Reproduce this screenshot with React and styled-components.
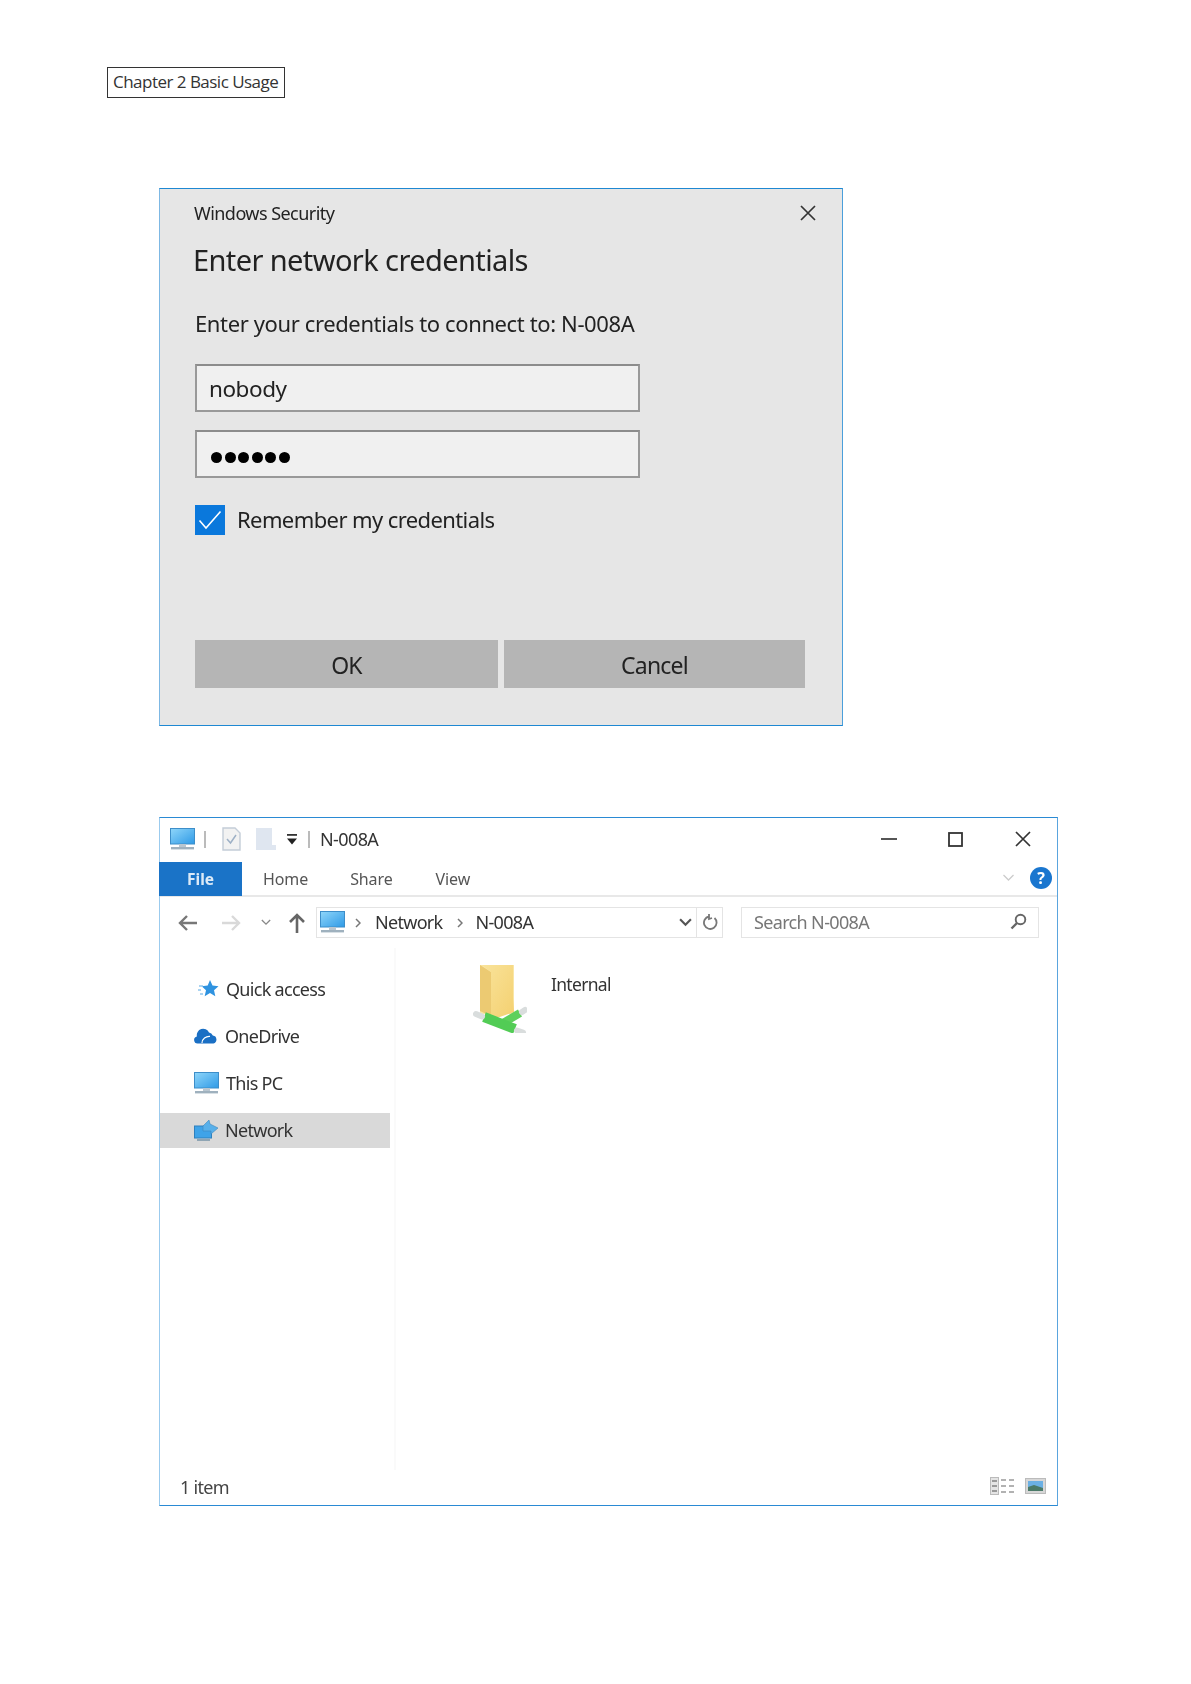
import React from 'react';
import styled, { createGlobalStyle } from 'styled-components';

const Global = createGlobalStyle`
  html, body { margin: 0; padding: 0; background: #fff; }
  * { box-sizing: border-box; }
`;
const Page = styled.div`
  width: 1191px; height: 1684px; padding: 67px 0 0 0; background: #fff; overflow: hidden;
  font-family: "Noto Sans", "Open Sans", sans-serif; color: #222;
`;
const ChapterTag = styled.div`
  margin-left: 107px; width: 178px; height: 31px; border: 1px solid #333;
  display: flex; align-items: center; padding: 0 0 2px 5px; white-space: nowrap;
  font: 17px/1 "Open Sans", sans-serif; letter-spacing: -0.52px; color: #333;
`;
const Dialog = styled.section`
  margin: 90px 0 0 159px; width: 684px; height: 538px;
  border: 1px solid #1e88d2; border-left-color: #7db8e4; border-right-color: #4b9fdb; background: #e6e6e6;
  padding: 10.5px 37px 37px 35px; display: flex; flex-direction: column; filter: blur(0.35px);
`;
const DialogTitleRow = styled.div`
  height: 26px; display: flex; align-items: center; justify-content: space-between;
`;
const DialogTitle = styled.div`
  font-size: 18px; letter-spacing: -0.55px; margin-left: -1px; color: #222; white-space: nowrap;
`;
const CloseSlot = styled.span`display: inline-flex; margin-right: -11px;`;
const DialogHeading = styled.h1`
  margin: 16px 0 0 -2px; font-size: 29px; line-height: 36px; font-weight: 400; letter-spacing: -0.6px; color: #222; white-space: nowrap;
`;
const Prompt = styled.p`
  margin: 30.5px 0 0; font-size: 22px; line-height: 30px; letter-spacing: -0.38px; color: #222; white-space: nowrap;
`;
const Field = styled.div`
  margin-top: ${p => p.$mt}px; width: 445px; height: 48px; flex: none; border: 2px solid #999; border-top-color: #8c8c8c;
  background: #f0f0f0; padding: 2px 0 0 12px; display: flex; align-items: center;
  font-size: 22.5px; letter-spacing: -0.45px; color: #222;
`;
const DotRow = styled.div`display: flex; gap: 2.6px; padding: 6px 0 0 2px;`;
const Dot = styled.span`width: 11px; height: 11px; border-radius: 50%; background: #000;`;
const CheckRow = styled.label`
  margin-top: 27px; display: flex; align-items: center; gap: 12px; height: 30px; flex: none;
  font-size: 22px; letter-spacing: -0.6px; color: #222; white-space: nowrap;
`;
const CheckLabel = styled.span`padding-bottom: 2px;`;
const CheckBoxMark = styled.span`
  width: 30px; height: 30px; background: #0a78dc; display: flex; align-items: center; justify-content: center;
`;
const ButtonRow = styled.div`margin-top: auto; display: flex; gap: 6px;`;
const DialogButton = styled.button`
  width: 303px; height: 48px; border: 0; padding: 2px 0 0; background: #b5b5b5;
  font: 400 23px "Noto Sans", sans-serif; letter-spacing: -0.8px; color: #222;
  &:last-child { width: 301px; }
`;
const Explorer = styled.section`
  margin: 91px 0 0 159px; width: 899px; height: 689px; display: flex; flex-direction: column;
  border: 1px solid #2a8ad4; border-left-color: #9bcbee; border-right-color: #5aa5de; background: #fff;
  font-size: 18px; letter-spacing: -0.35px; color: #333; filter: blur(0.4px);
`;
const TitleBar = styled.header`height: 44px; display: flex; align-items: center; padding: 0 0 2px 10px; flex: none;`;
const TitleSep = styled.span`width: 2px; height: 17px; background: #bbb; margin: 0 ${p => p.$mr}px 0 ${p => p.$ml}px;`;
const IconSlot = styled.span`display: inline-flex; flex: none; margin: 0 ${p => p.$mr || 0}px 0 ${p => p.$ml || 0}px;`;
const WindowTitle = styled.span`font-size: 18px; letter-spacing: -0.6px; color: #333;`;
const WindowControls = styled.div`margin-left: auto; display: flex; align-items: center; gap: 51px; padding-right: 26px;`;
const RibbonRow = styled.nav`
  height: 35px; flex: none; display: flex; align-items: stretch; border-bottom: 2px solid #e8e8e8; padding-right: 5px;
`;
const FileTab = styled.span`
  width: 83px; margin: 0 0 -1px -1px; background: #1a73c7; color: #dceaf7; font-weight: 700; display: flex; align-items: center; justify-content: center;
  font-size: 15.5px; letter-spacing: 0;
`;
const RibbonTab = styled.span`
  margin-left: ${p => p.$ml}px; display: flex; align-items: center; font-size: 16px; letter-spacing: -0.1px; color: #555;
`;
const RibbonEnd = styled.div`margin-left: auto; display: flex; align-items: center; gap: 15px; padding-bottom: 1px;`;
const HelpBadge = styled.span`
  width: 22px; height: 22px; border-radius: 50%; background: #1a76cf; color: #fff; font: 700 16px/22px "Noto Sans", sans-serif; letter-spacing: 0; text-align: center;
`;
const AddressRow = styled.div`height: 51px; flex: none; display: flex; align-items: center; padding-left: 18px;`;
const AddressBar = styled.div`
  width: 407px; height: 31px; margin-left: 10px; border: 1.5px solid #e4e4e4; display: flex; align-items: center; padding-left: 3px;
  font-size: 18px; letter-spacing: -0.7px; color: #333;
`;
const Crumbtext = styled.span`padding-bottom: 2px;`;
const RefreshCell = styled.span`
  width: 26px; height: 100%; border-left: 1.5px solid #e4e4e4; padding-left: 2px; display: flex; align-items: center; justify-content: center;
`;
const DropSlot = styled.span`display: inline-flex; margin: 0 4px 0 auto;`;
const SearchBox = styled.div`
  width: 298px; height: 31px; margin-left: 18px; border: 1.5px solid #e4e4e4; display: flex; align-items: center; justify-content: space-between;
  padding: 0 11px 2px 12px; font-size: 18px; letter-spacing: -0.65px; color: #777;
`;
const Body = styled.div`flex: 1; display: flex; min-height: 0;`;
const Sidebar = styled.aside`
  width: 236px; flex: none; border-right: 2px solid #fafafa; padding-top: 24px;
`;
const NavRow = styled.div`
  height: 35px; width: 230px; margin-bottom: 12px; display: flex; align-items: center; padding: 0 0 1px ${p => p.$pl}px; gap: ${p => p.$gap}px;
  background: ${p => p.$active ? '#d9d9d9' : 'transparent'}; font-size: 18px; letter-spacing: -0.7px; color: #333;
`;
const Content = styled.main`flex: 1; display: flex; align-items: flex-start; padding: 13px 0 0 77px;`;
const ShareItem = styled.div`display: flex; align-items: flex-start; gap: 24px;`;
const ShareName = styled.span`font-size: 17.5px; letter-spacing: -0.7px; margin-top: 11px; color: #333;`;
const StatusBar = styled.footer`
  height: 35px; flex: none; display: flex; align-items: center; justify-content: space-between; padding: 0 11px 1px 20px; font-size: 18px; letter-spacing: -0.7px; color: #444;
`;
const ViewIcons = styled.div`display: flex; align-items: center; gap: 10px; padding-bottom: 2px;`;

const Monitor = ({ w = 25 }) => (
  <svg width={w} height={w * 0.9} viewBox="0 0 25 22.5">
    <defs><linearGradient id="scr" x1="0" y1="0" x2="1" y2="1"><stop offset="0" stopColor="#8fd6fa" /><stop offset="1" stopColor="#2f9ae6" /></linearGradient></defs>
    <rect x="0.5" y="0.5" width="24" height="15.5" fill="url(#scr)" stroke="#3d8ec9" />
    <rect x="9" y="16" width="7" height="3" fill="#b9c6d0" />
    <rect x="1" y="19" width="23" height="2.4" fill="#9fb1be" />
  </svg>
);
const Close = ({ s = 16, c = '#333', sw = 1.7 }) => (
  <svg width={s} height={s} viewBox="0 0 16 16"><path d="M1 1L15 15M15 1L1 15" stroke={c} strokeWidth={sw} fill="none" /></svg>
);
const Chevron = ({ w = 12, h = 8, c = '#555', sw = 2 }) => (
  <svg width={w} height={h} viewBox="0 0 12 8"><path d="M1 1l5 5 5-5" stroke={c} strokeWidth={sw} fill="none" /></svg>
);
const Crumb = ({ ml, mr }) => (
  <IconSlot $ml={ml} $mr={mr}><svg width="6" height="10" viewBox="0 0 6 10"><path d="M1 1l4 4-4 4" stroke="#777" strokeWidth="1.5" fill="none" /></svg></IconSlot>
);
const Arrow = ({ c, flip }) => (
  <svg width="20" height="18" viewBox="0 0 20 18" style={flip ? { transform: 'scaleX(-1)' } : undefined}>
    <path d="M19 9H2M9 2L2 9l7 7" stroke={c} strokeWidth="2.4" fill="none" />
  </svg>
);

export default function App() {
  return (
    <Page>
      <Global />
      <ChapterTag>Chapter 2 Basic Usage</ChapterTag>

      <Dialog>
        <DialogTitleRow>
          <DialogTitle>Windows Security</DialogTitle>
          <CloseSlot><Close s={16} /></CloseSlot>
        </DialogTitleRow>
        <DialogHeading>Enter network credentials</DialogHeading>
        <Prompt>Enter your credentials to connect to: N-008A</Prompt>
        <Field $mt={25.5}>nobody</Field>
        <Field $mt={18}><DotRow>{[0, 1, 2, 3, 4, 5].map(i => <Dot key={i} />)}</DotRow></Field>
        <CheckRow>
          <CheckBoxMark>
            <svg width="24" height="20" viewBox="0 0 24 20"><path d="M1.5 10.5l6.5 7.5L22.5 1.5" stroke="#fff" strokeWidth="1.6" fill="none" /></svg>
          </CheckBoxMark>
          <CheckLabel>Remember my credentials</CheckLabel>
        </CheckRow>
        <ButtonRow>
          <DialogButton>OK</DialogButton>
          <DialogButton>Cancel</DialogButton>
        </ButtonRow>
      </Dialog>

      <Explorer>
        <TitleBar>
          <Monitor w={25} />
          <TitleSep $ml={9} $mr={16} />
          <IconSlot>
            <svg width="19" height="24" viewBox="0 0 19 24"><path d="M1 1h12l5 5v17H1z" fill="#f2f2f2" stroke="#c4cdd8" strokeWidth="1.4" /><path d="M5 12l3.5 4L14 8" stroke="#9db0c6" strokeWidth="1.5" fill="none" /></svg>
          </IconSlot>
          <IconSlot $ml={15}>
            <svg width="20" height="24" viewBox="0 0 20 24"><path d="M0 1h16v17h4v5H0z" fill="#dfe6f0" /></svg>
          </IconSlot>
          <IconSlot $ml={10}>
            <svg width="12" height="11" viewBox="0 0 12 11"><rect x="1" y="0" width="10" height="1.8" fill="#333" /><path d="M1 4.5h10L6 10.5z" fill="#222" /></svg>
          </IconSlot>
          <TitleSep $ml={10} $mr={10} />
          <WindowTitle>N-008A</WindowTitle>
          <WindowControls>
            <svg width="16" height="16" viewBox="0 0 16 16"><rect x="0" y="7" width="16" height="2" fill="#555" /></svg>
            <svg width="15" height="15" viewBox="0 0 15 15"><rect x="1" y="1" width="13" height="13" fill="none" stroke="#333" strokeWidth="1.8" /></svg>
            <IconSlot $ml={1}><Close s={16} /></IconSlot>
          </WindowControls>
        </TitleBar>

        <RibbonRow>
          <FileTab>File</FileTab>
          <RibbonTab $ml={21}>Home</RibbonTab>
          <RibbonTab $ml={42}>Share</RibbonTab>
          <RibbonTab $ml={43}>View</RibbonTab>
          <RibbonEnd>
            <Chevron w={13} h={8} c="#ccc" sw={1.3} />
            <HelpBadge>?</HelpBadge>
          </RibbonEnd>
        </RibbonRow>

        <AddressRow>
          <Arrow c="#777" />
          <IconSlot $ml={23}><Arrow c="#d9d9d9" flip /></IconSlot>
          <IconSlot $ml={20}><Chevron w={10} h={7} c="#888" sw={1.6} /></IconSlot>
          <IconSlot $ml={17}>
            <svg width="18" height="20" viewBox="0 0 18 20"><path d="M9 20V2M2 9l7-7 7 7" stroke="#666" strokeWidth="2.6" fill="none" /></svg>
          </IconSlot>
          <AddressBar>
            <Monitor w={25} />
            <Crumb ml={10} mr={14} />
            <Crumbtext>Network</Crumbtext>
            <Crumb ml={14} mr={13} />
            <Crumbtext>N-008A</Crumbtext>
            <DropSlot><Chevron w={13} h={9} c="#555" /></DropSlot>
            <RefreshCell>
              <svg width="16" height="18" viewBox="0 0 16 18"><path d="M6 2.500a6.300 6.300 0 1 0 5.500 1.500M6 0v5l3-1" stroke="#777" strokeWidth="1.8" fill="none" /></svg>
            </RefreshCell>
          </AddressBar>
          <SearchBox>
            Search N-008A
            <svg width="17" height="17" viewBox="0 0 17 17"><circle cx="10.5" cy="6.5" r="4.8" fill="none" stroke="#666" strokeWidth="1.9" /><path d="M7 10L1.5 15.5" stroke="#666" strokeWidth="2.4" /></svg>
          </SearchBox>
        </AddressRow>

        <Body>
          <Sidebar>
            <NavRow $pl={38} $gap={7}>
              <svg width="21" height="20" viewBox="0 0 21 20"><path d="M12 1l2.500 5.600 6 .6-4.500 4 1.300 6-5.300-3.100-5.300 3.100 1.300-6-4.300-4 6-.6z" fill="#2f93e0" /><path d="M1 7h4M0 11h3M2 15h3" stroke="#8fc6ee" strokeWidth="1.3" /></svg>
              Quick access
            </NavRow>
            <NavRow $pl={34} $gap={7}>
              <svg width="24" height="18" viewBox="0 0 24 18"><path d="M3.500 16.500a3.600 3.600 0 0 1-.6-7.100A6.400 6.400 0 0 1 15 5.500a5 5 0 0 1 3.800 3A4.100 4.100 0 0 1 19.500 16.500z" fill="#1a6fc4" /><path d="M8 16c0-4 4-7 8-6.600" stroke="#fff" strokeWidth="1.2" fill="none" /></svg>
              OneDrive
            </NavRow>
            <NavRow $pl={34} $gap={7}>
              <Monitor w={25} />
              This PC
            </NavRow>
            <NavRow $pl={34} $gap={6} $active>
              <svg width="25" height="23" viewBox="0 0 25 23"><rect x="0.5" y="7" width="17" height="12" fill="#3fa3e8" stroke="#2f80bd" /><path d="M9 7l6-6 1 4 8 4-7 6v-3H9z" fill="#58b0ea" stroke="#3d87bd" strokeWidth="0.6" /><rect x="3" y="20" width="13" height="2" fill="#8fa5b4" /></svg>
              Network
            </NavRow>
          </Sidebar>
          <Content>
            <ShareItem>
              <svg width="54" height="72" viewBox="0 0 54 72">
                <defs><linearGradient id="fold" x1="0" y1="0" x2="1" y2="1"><stop offset="0" stopColor="#f9e39a" /><stop offset="1" stopColor="#f4d070" /></linearGradient></defs>
                <path d="M7 4h34v49H7z" fill="#f9e6a6" />
                <path d="M7 4l11 7v44L7 50z" fill="#ecca72" />
                <path d="M18 11L9 4h31v33l1 14-23 8z" fill="url(#fold)" />
                <path d="M30 62L47 52" stroke="#5ed05c" strokeWidth="8" />
                <path d="M11 56L42 68" stroke="#52cc55" strokeWidth="10" />
                <path d="M3 53L9 55.500M49 51L52 49M44 69.500L50 71.500" stroke="#d9dddd" strokeWidth="6" strokeLinecap="round" fill="none" />
              </svg>
              <ShareName>Internal</ShareName>
            </ShareItem>
          </Content>
        </Body>

        <StatusBar>
          1 item
          <ViewIcons>
            <svg width="25" height="18" viewBox="0 0 25 18">
              <rect x="0.5" y="0.5" width="8" height="17" fill="#e4e4e4" stroke="#bbb" />
              <path d="M2 4h5M2 9h5M2 14h5" stroke="#999" strokeWidth="2" />
              <path d="M11 3h5M19 3h5M11 9h5M19 9h5M11 15h5M19 15h5" stroke="#999" strokeWidth="1.6" />
            </svg>
            <svg width="21" height="16" viewBox="0 0 21 16">
              <rect x="0.5" y="0.5" width="20" height="15" fill="#d7d7d7" stroke="#bbb" />
              <rect x="3" y="3" width="15" height="10" fill="#6bb0e4" />
              <path d="M3 13V9l6-2 9 3v3z" fill="#4b7a68" />
            </svg>
          </ViewIcons>
        </StatusBar>
      </Explorer>
    </Page>
  );
}
